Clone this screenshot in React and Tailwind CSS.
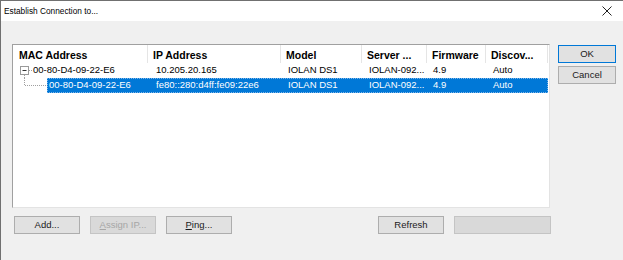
import React from "react";

const FONT = { fontFamily: '"Liberation Sans", Arial, sans-serif' };

const COLS = [
  { key: "mac", title: "MAC Address", w: 134 },
  { key: "ip", title: "IP Address", w: 133 },
  { key: "model", title: "Model", w: 81 },
  { key: "server", title: "Server ...", w: 65 },
  { key: "fw", title: "Firmware", w: 59 },
  { key: "disc", title: "Discov...", w: 62 },
];

/* Button */
function Btn({ children, w = "w-[66px]", primary, disabled }) {
  const border = primary
    ? "border-[#0078d7]"
    : disabled
    ? "border-[#c4c4c4]"
    : "border-[#adadad]";
  const bg = disabled ? "bg-[#d9d9d9]" : "bg-[#e1e1e1]";
  const text = disabled ? "text-[#a6a6a6]" : "text-[#1a1a1a]";
  return (
    <div
      className={`${w} h-[18px] border ${border} ${bg} ${text} flex items-center justify-center text-[9.5px] leading-none`}
    >
      {children}
    </div>
  );
}

/* Tree connector for parent row */
function ParentTree() {
  return (
    <svg width="19" height="15" className="shrink-0">
      <rect x="6.5" y="3.5" width="8" height="8" fill="#fff" stroke="#9a9a9a" />
      <line x1="8.5" y1="7.5" x2="12.5" y2="7.5" stroke="#333" />
      <line x1="10.5" y1="12" x2="10.5" y2="15" stroke="#a0a0a0" strokeDasharray="1 1" />
      <line x1="15" y1="7.5" x2="19" y2="7.5" stroke="#a0a0a0" strokeDasharray="1 1" />
    </svg>
  );
}

/* Tree connector for child row */
function ChildTree() {
  return (
    <svg width="33" height="15" className="shrink-0">
      <line x1="10.5" y1="0" x2="10.5" y2="7" stroke="#a0a0a0" strokeDasharray="1 1" />
      <line x1="11" y1="7.5" x2="33" y2="7.5" stroke="#a0a0a0" strokeDasharray="1 1" />
    </svg>
  );
}

export default function App() {
  return (
    <div
      className="w-[623px] h-[260px] bg-[#f0f0f0] border-t border-l border-[#707070] overflow-hidden text-[#000]"
      style={FONT}
    >
      {/* title bar */}
      <div className="h-[20px] bg-white flex items-center justify-between pl-[3px] pr-[11px]">
        <span className="text-[8.3px]">Establish Connection to...</span>
        <svg width="10" height="10">
          <line x1="0.5" y1="0.5" x2="9.5" y2="9.5" stroke="#222" />
          <line x1="9.5" y1="0.5" x2="0.5" y2="9.5" stroke="#222" />
        </svg>
      </div>

      <div className="flex pt-[23px] pl-[11px]">
        <div className="w-[538px] flex flex-col">
          {/* list view */}
          <div className="h-[164px] bg-white border border-t-[#a0a0a0] border-l-[#a0a0a0] border-r-[#e3e3e3] border-b-[#e3e3e3] pl-[1px]">
            <div className="flex h-[18px] items-center">
              {COLS.map((c) => (
                <div
                  key={c.key}
                  className="h-full flex items-center pt-[3px] pl-[5px] border-r border-[#e5e5e5] font-bold text-[10.5px] whitespace-nowrap overflow-hidden"
                  style={{ width: c.w }}
                >
                  {c.title}
                </div>
              ))}
            </div>

            <div className="flex h-[15px] items-center text-[9.5px] whitespace-nowrap">
              <div className="w-[134px] flex items-center">
                <ParentTree />
                <span>00-80-D4-09-22-E6</span>
              </div>
              <div className="w-[133px] pl-[8px]">10.205.20.165</div>
              <div className="w-[81px] pl-[7px]">IOLAN DS1</div>
              <div className="w-[65px] pl-[7px]">IOLAN-092...</div>
              <div className="w-[59px] pl-[6px]">4.9</div>
              <div className="w-[62px] pl-[7px]">Auto</div>
            </div>

            <div className="flex h-[15px] items-center text-[9.5px] whitespace-nowrap">
              <ChildTree />
              <div className="flex h-full items-center flex-1 mr-[1px] bg-[#0078d7] text-white border border-dotted border-[#7fb5e8]">
                <div className="w-[100px] pl-[1px]">00-80-D4-09-22-E6</div>
                <div className="w-[133px] pl-[8px]">fe80::280:d4ff:fe09:22e6</div>
                <div className="w-[81px] pl-[7px]">IOLAN DS1</div>
                <div className="w-[65px] pl-[7px]">IOLAN-092...</div>
                <div className="w-[59px] pl-[6px]">4.9</div>
                <div className="w-[58px] pl-[7px]">Auto</div>
              </div>
            </div>
          </div>

          {/* bottom buttons */}
          <div className="flex mt-[8px] pl-[2px]">
            <div className="flex gap-[10px]">
              <Btn>Add...</Btn>
              <Btn disabled>
                <span>
                  <u>A</u>ssign IP...
                </span>
              </Btn>
              <Btn>
                <span>
                  <u>P</u>ing...
                </span>
              </Btn>
            </div>
            <div className="flex gap-[10px] ml-auto -mr-[1px]">
              <Btn>Refresh</Btn>
              <Btn w="w-[97px]" disabled>
                {""}
              </Btn>
            </div>
          </div>
        </div>

        {/* right buttons */}
        <div className="flex flex-col gap-[3px] ml-[8px] mt-[1px]">
          <Btn w="w-[58px]" primary>
            OK
          </Btn>
          <Btn w="w-[58px]">Cancel</Btn>
        </div>
      </div>
    </div>
  );
}
